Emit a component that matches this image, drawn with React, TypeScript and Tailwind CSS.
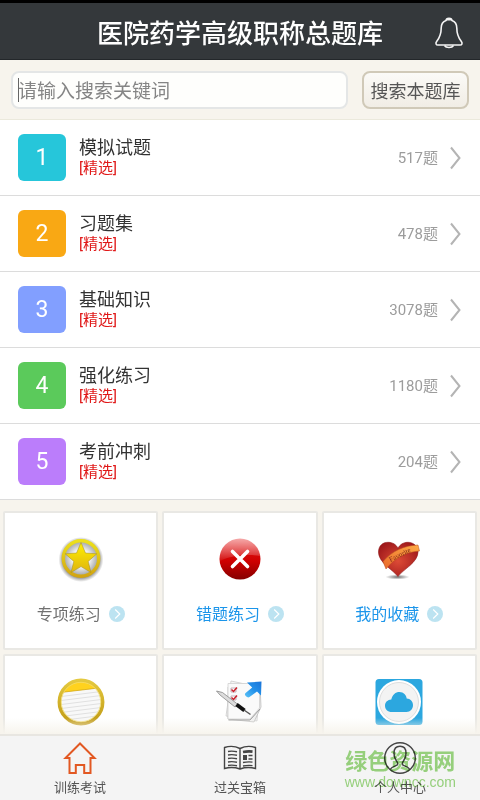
import type { ReactNode } from "react";

interface Category {
  title: string;
  count: number;
  color: string;
}

interface Tool {
  id: string;
  label?: string;
  labelClass?: string;
  icon: ReactNode;
}

const categories: Category[] = [
  { title: "模拟试题", count: 517, color: "bg-[#26c6da]" },
  { title: "习题集", count: 478, color: "bg-[#f9a814]" },
  { title: "基础知识", count: 3078, color: "bg-[#829fff]" },
  { title: "强化练习", count: 1180, color: "bg-[#5bca5b]" },
  { title: "考前冲刺", count: 204, color: "bg-[#bb7dfb]" },
];

const tools: Tool[] = [
  { id: "special", label: "专项练习", labelClass: "text-[#707070]", icon: <StarIcon /> },
  { id: "mistakes", label: "错题练习", labelClass: "text-[#1b95ea]", icon: <CrossIcon /> },
  { id: "favorites", label: "我的收藏", labelClass: "text-[#1b95ea]", icon: <HeartIcon /> },
  { id: "notes", icon: <NoteIcon /> },
  { id: "exam", icon: <ExamIcon /> },
  { id: "cloud", icon: <CloudIcon /> },
];

export default function App() {
  return (
    <div className="flex h-screen flex-col overflow-hidden bg-[#f7f4ed] font-['Noto_Sans','Noto_Sans_CJK_SC',sans-serif]">
      <Header />
      <SearchBar />
      <main className="relative min-h-0 flex-1 overflow-hidden">
        <ul>
          {categories.map((item, i) => (
            <CategoryRow key={item.title} index={i + 1} item={item} />
          ))}
        </ul>
        <div className="grid grid-cols-3 gap-1 px-[3px] pt-[11px]">
          {tools.map((tool) => (
            <ToolCard key={tool.id} tool={tool} />
          ))}
        </div>
        <div className="pointer-events-none absolute inset-x-0 bottom-0 h-4 bg-linear-to-b from-[#f7f4ed]/0 to-[#f7f4ed]" />
      </main>
      <BottomNav />
    </div>
  );
}

function Header() {
  return (
    <header className="flex h-[60px] shrink-0 items-center border-t-[3px] border-b border-t-black border-b-[#23272a] bg-[#34383b] px-4 pt-1">
      <div className="w-8" />
      <h1 className="flex-1 text-center text-[26px] leading-8 font-medium text-white">医院药学高级职称总题库</h1>
      <button type="button" aria-label="通知" className="flex w-8 justify-end">
        <svg width="30" height="34" viewBox="0 -1 30 34" fill="none" stroke="#f4f4f4" strokeWidth="1.6">
          <path d="M12 3.5c.2-3 5.8-3 6 0 3.500 1.300 4.800 4 4.800 7.500 0 5.500.7 8.500 4.400 13.300 1.600 2.200.8 3.700-1.200 3.700H4c-2 0-2.800-1.500-1.200-3.700C6.500 19.500 7.200 16.500 7.200 11c0-3.500 1.300-6.200 4.800-7.500z" />
          <path d="M12 2.800h6M10.500 28.500c1.500 2.700 7.500 2.700 9 0" />
        </svg>
      </button>
    </header>
  );
}

function SearchBar() {
  return (
    <form
      className="flex h-[60px] shrink-0 items-center gap-[14px] border-b border-[#ebe9dc] px-[11px]"
      onSubmit={(e) => e.preventDefault()}
    >
      <div className="relative flex-1">
        <input
          type="text"
          aria-label="搜索关键词"
          placeholder="请输入搜索关键词"
          className="block h-[38px] w-full rounded-lg border-2 border-[#e4e6e6] bg-[#fefefc] px-[5px] pt-[2px] text-[19px] text-[#444] outline-none placeholder:text-[#858585]"
        />
        {/* text cursor */}
        <span className="absolute top-[7px] left-[7px] h-6 w-px bg-[#666]" />
      </div>
      <button
        type="submit"
        className="h-[38px] w-[107px] rounded-lg border-2 border-[#d0c9b8] bg-linear-to-b from-[#fbfaf7] to-[#f1ede5] pt-[2px] text-[18px] leading-6 whitespace-nowrap text-[#555]"
      >
        搜索本题库
      </button>
    </form>
  );
}

function CategoryRow({ index, item }: { index: number; item: Category }) {
  return (
    <li className="font-[Roboto,'Noto_Sans_CJK_SC',sans-serif]">
      <a href="#" className="flex h-[76px] items-center border-b border-[#dcdcdc] bg-white px-[18px]">
        <span className={`flex h-[47px] w-12 items-center justify-center rounded-md text-[23px] leading-6 text-white ${item.color}`}>
          {index}
        </span>
        <div className="ml-[13px] flex-1">
          <p className="text-[18px] leading-5 text-[#333]">{item.title}</p>
          <p className="text-[15px] leading-5 text-[#e01818]">[精选]</p>
        </div>
        <span className="mr-3 text-[15px] leading-5 text-[#9c9c9c]">{item.count}题</span>
        <svg width="12" height="24" viewBox="0 0 12 24" fill="none" stroke="#b4b4b4" strokeWidth="2">
          <path d="M1 1.500 9.500 12 1 22.500" />
        </svg>
      </a>
    </li>
  );
}

function ToolCard({ tool }: { tool: Tool }) {
  return (
    <a
      href="#"
      aria-label={tool.label ?? tool.id}
      className="flex h-[139px] flex-col items-center rounded-xs border-2 border-[#e9e8e4] bg-white pt-5"
    >
      <div className="flex h-[52px] items-center">{tool.icon}</div>
      {tool.label && (
        <div className="mt-[19px] flex items-center gap-2">
          <span className={`text-[16px] leading-5 ${tool.labelClass}`}>{tool.label}</span>
          <svg width="16" height="16" viewBox="0 0 16 16" fill="none">
            <circle cx="8" cy="8" r="8" fill="#bce3f1" />
            <path d="M6.200 3.500 10.800 8l-4.600 4.500" stroke="#fff" strokeWidth="1.200" />
          </svg>
        </div>
      )}
    </a>
  );
}

function BottomNav() {
  return (
    <nav className="relative grid h-[66px] shrink-0 grid-cols-3 border-t-2 border-[#e8e6e1] bg-[#f4f4f4]">
      <NavItem label="训练考试">
        <svg width="34" height="34" viewBox="0 0 34 34" fill="none" stroke="#e25822" strokeWidth="2">
          <path d="M17 2.500 2.500 17h4v15h6.300v-8h8.400v8h6.300V17h4z" />
        </svg>
      </NavItem>
      <NavItem label="过关宝箱">
        <svg width="34" height="34" viewBox="0 0 34 34" fill="none" stroke="#444" strokeWidth="1.400">
          <path d="M17 7.500C12 5 6 5 1.500 6.500v21c4.500-1.200 10.500-1.200 15.500.5 5-1.700 11-1.700 15.500-.5v-21C28 5 22 5 17 7.500zM17 7.500V28" />
          <path d="M5 10.500c3-.6 6-.4 9 .3M5 14c3-.6 6-.4 9 .3M5 17.500c3-.6 6-.4 9 .3M5 21c3-.6 6-.4 9 .3M5 24.500c3-.6 6-.4 9 .3M25.500 14.500h4M25.500 18h4M20 21.500c3-.6 6-.8 9.500-.4M20 25c3-.6 6-.8 9.500-.4" />
          <path d="M20 11c3-.6 6-.8 9.500-.4" strokeWidth="2.600" />
          <path d="M20 14h4v5h-4z" fill="#444" stroke="none" />
        </svg>
      </NavItem>
      <NavItem label="个人中心">
        <svg width="34" height="34" viewBox="0 0 34 34" fill="none" stroke="#444" strokeWidth="1.400">
          <circle cx="17" cy="17" r="15.300" />
          <path d="M7 28.500c1.500-2.500 5-3.500 7.200-4.500.8-.5.6-2.300-.2-3.300-2-2.500-3-5.700-3-8.700 0-4.200 2.500-6.700 6-6.700s6 2.500 6 6.700c0 3-1 6.200-3 8.700-.8 1-1 2.800-.2 3.300 2.200 1 5.700 2 7.200 4.500" />
        </svg>
      </NavItem>
      <div className="pointer-events-none absolute top-3 right-6 text-center text-[#9dd982] mix-blend-multiply">
        <p className="text-[22px] leading-6 font-bold">绿色资源网</p>
        <p className="font-['Liberation_Sans',sans-serif] text-[14px] leading-5">www.downcc.com</p>
      </div>
    </nav>
  );
}

function NavItem({ label, children }: { label: string; children: ReactNode }) {
  return (
    <a href="#" className="flex flex-col items-center pt-[5px] text-[13px] leading-5 text-[#555]">
      {children}
      <span className="mt-[2px]">{label}</span>
    </a>
  );
}

function StarIcon() {
  return (
    <svg width="48" height="48" viewBox="0 0 48 48">
      <defs>
        <linearGradient id="starGold" x1="0" y1="0" x2="0" y2="1">
          <stop offset="0" stopColor="#fff000" />
          <stop offset="1" stopColor="#dfb40e" />
        </linearGradient>
        <linearGradient id="starRing" x1="0" y1="0" x2="0" y2="1">
          <stop offset="0" stopColor="#ece01c" />
          <stop offset="1" stopColor="#d2a512" />
        </linearGradient>
        <radialGradient id="starShade">
          <stop offset=".78" stopColor="#555" stopOpacity=".75" />
          <stop offset="1" stopColor="#777" stopOpacity="0" />
        </radialGradient>
        <radialGradient id="starInner">
          <stop offset=".5" stopColor="#f4f5f6" />
          <stop offset="1" stopColor="#a3a5a6" />
        </radialGradient>
      </defs>
      <circle cx="24" cy="24.500" r="22.500" fill="url(#starShade)" />
      <circle cx="24" cy="23.500" r="17" fill="url(#starInner)" />
      <circle cx="24" cy="23.500" r="17.700" fill="none" stroke="url(#starRing)" strokeWidth="3.400" />
      <path
        d="M24 7.500 28.500 18 39.800 18.800 31.200 26.400 34 37.500 24 31.600 14 37.500 16.800 26.400 8.200 18.800 19.500 18z"
        fill="url(#starGold)"
        stroke="#a08b20"
        strokeWidth=".5"
      />
    </svg>
  );
}

function CrossIcon() {
  return (
    <svg width="48" height="48" viewBox="0 0 48 48">
      <defs>
        <linearGradient id="crossRed" x1="0" y1="0" x2="0" y2="1">
          <stop offset="0" stopColor="#e51c1c" />
          <stop offset=".55" stopColor="#cf0000" />
          <stop offset="1" stopColor="#850000" />
        </linearGradient>
        <linearGradient id="crossGloss" x1="0" y1="0" x2="0" y2="1">
          <stop offset="0" stopColor="#fff" stopOpacity=".65" />
          <stop offset="1" stopColor="#fff" stopOpacity=".05" />
        </linearGradient>
      </defs>
      <circle cx="24" cy="24" r="20.500" fill="url(#crossRed)" />
      <path d="M4 24a20 20 0 0 1 40-3C32 19 16 20 4 26z" fill="url(#crossGloss)" />
      <path d="m16.500 16.500 15 15m0-15-15 15" stroke="#fff" strokeWidth="3.600" strokeLinecap="round" />
    </svg>
  );
}

function HeartIcon() {
  return (
    <svg width="48" height="48" viewBox="0 0 48 48">
      <defs>
        <radialGradient id="heartRed" cx=".5" cy=".55" r=".6">
          <stop offset="0" stopColor="#dd4b36" />
          <stop offset="1" stopColor="#a0191b" />
        </radialGradient>
        <radialGradient id="heartShadow">
          <stop offset="0" stopColor="#333" stopOpacity=".7" />
          <stop offset="1" stopColor="#333" stopOpacity="0" />
        </radialGradient>
        <linearGradient id="ribbon" x1="0" y1="1" x2="1" y2="0">
          <stop offset="0" stopColor="#ea6a2c" />
          <stop offset="1" stopColor="#fdab45" />
        </linearGradient>
      </defs>
      <ellipse cx="22.500" cy="42" rx="12" ry="2.500" fill="url(#heartShadow)" />
      <path
        d="M23 41.500C17 34 3.500 27.500 3.500 17 3.500 10.500 8 7.300 13 7.300c4.500 0 8.300 2.300 10 6 1.700-3.700 5.500-6 10-6 5 0 10 3.500 10 9.700C43 27.500 28.500 34 23 41.500z"
        fill="url(#heartRed)"
        stroke="#8e1719"
        strokeWidth=".6"
      />
      <path d="M8 26.500C17 16 29 10.500 43 10l1.500 6C30 17 19 24 11 34z" fill="url(#ribbon)" stroke="#b44b1d" strokeWidth=".5" />
      <text x="15.500" y="27" transform="rotate(-27 15.500 27)" fontSize="7" fontFamily="Liberation Serif, serif" fill="#7c2414">
        Favorite
      </text>
    </svg>
  );
}

function NoteIcon() {
  return (
    <svg width="48" height="48" viewBox="0 0 48 48">
      <defs>
        <linearGradient id="noteRing" x1="0" y1="0" x2="0" y2="1">
          <stop offset="0" stopColor="#e4c93f" />
          <stop offset="1" stopColor="#c09a16" />
        </linearGradient>
        <clipPath id="noteClip">
          <circle cx="24" cy="24" r="21" />
        </clipPath>
      </defs>
      <circle cx="24" cy="24" r="22" fill="#f8f8f8" />
      <g clipPath="url(#noteClip)">
        <path d="M0 0h48v9.500L4 14.500z" fill="#ffd21e" />
        <path
          d="m4 18.500 40-5M4 22.500l40-5M4 26.500l40-5M4 30.500l40-5M4 34.500l40-5M4 38.500l40-5M4 42.500l40-5"
          stroke="#e0e0e0"
        />
        <path d="m6 14.200 38-4.500" stroke="#d3a91a" strokeWidth=".8" />
      </g>
      <circle cx="24" cy="24" r="21.700" fill="none" stroke="url(#noteRing)" strokeWidth="3.500" />
      <circle cx="24" cy="24" r="19.700" fill="none" stroke="#f1dc70" strokeWidth=".8" />
    </svg>
  );
}

function ExamIcon() {
  return (
    <svg width="48" height="48" viewBox="0 0 48 48">
      <defs>
        <linearGradient id="examArrow" x1="0" y1="1" x2="1" y2="0">
          <stop offset="0" stopColor="#5cc4f7" />
          <stop offset=".5" stopColor="#2391ea" />
          <stop offset="1" stopColor="#1c74d8" />
        </linearGradient>
      </defs>
      <path d="m15 3 28 6-2 34-31-5z" fill="#f6f6f6" stroke="#ccc" strokeWidth=".8" />
      <path d="m12 9 32-2 1 22-7 15-26-3z" fill="#f0f0f0" stroke="#bdbdbd" strokeWidth=".8" />
      <path d="M12 5.500h31.500V30L34 41H12z" fill="#fafafa" stroke="#d0d0d0" strokeWidth=".8" />
      <path d="M12.500 42H34l10-11" fill="none" stroke="#999" />
      <path d="M15 10h5v4h-5zM15 18h5v4h-5z" fill="#fff" stroke="#b3a0a8" strokeWidth=".8" />
      <path d="m15.500 11.500 2 2 3.500-4M15.500 19.500l2 2 3.500-4" fill="none" stroke="#c9202a" strokeWidth="1.500" />
      <path d="m.5 13 6 1.500 15.500 12-3 2.500L4 17z" fill="#ddd" stroke="#888" strokeWidth=".8" />
      <path d="m20.500 26.500 8 6" stroke="#111" strokeWidth="4" />
      <path d="m28 32 6.500 4.500" stroke="#555" strokeWidth="1.500" />
      <path d="M31 4.500 45.500 3.500l-.5 14-4-4-7.500 5.500c-1 .8-2.500.4-3.800-1-1.200-1.500-1-2.500.2-3.300l6.300-5.200z" fill="url(#examArrow)" />
    </svg>
  );
}

function CloudIcon() {
  return (
    <svg width="48" height="48" viewBox="0 0 48 48">
      <rect x=".5" y="1" width="47" height="46" rx="3.500" fill="#2ca7df" />
      <circle cx="24" cy="24" r="22" fill="#fff" />
      <circle cx="24" cy="24" r="19.500" fill="#f3f3f3" stroke="#dedede" />
      <path d="M17 34c-4.500 0-7-2.700-7-6.300 0-3.500 2.700-6 6.300-6.200C17.500 16.500 20.500 14 24.500 14c4.200 0 6.800 3 7.200 6.500 3.700 0 6.300 3 6.300 6.500 0 4-2.700 7-6.500 7z" fill="#2ca7df" />
    </svg>
  );
}
